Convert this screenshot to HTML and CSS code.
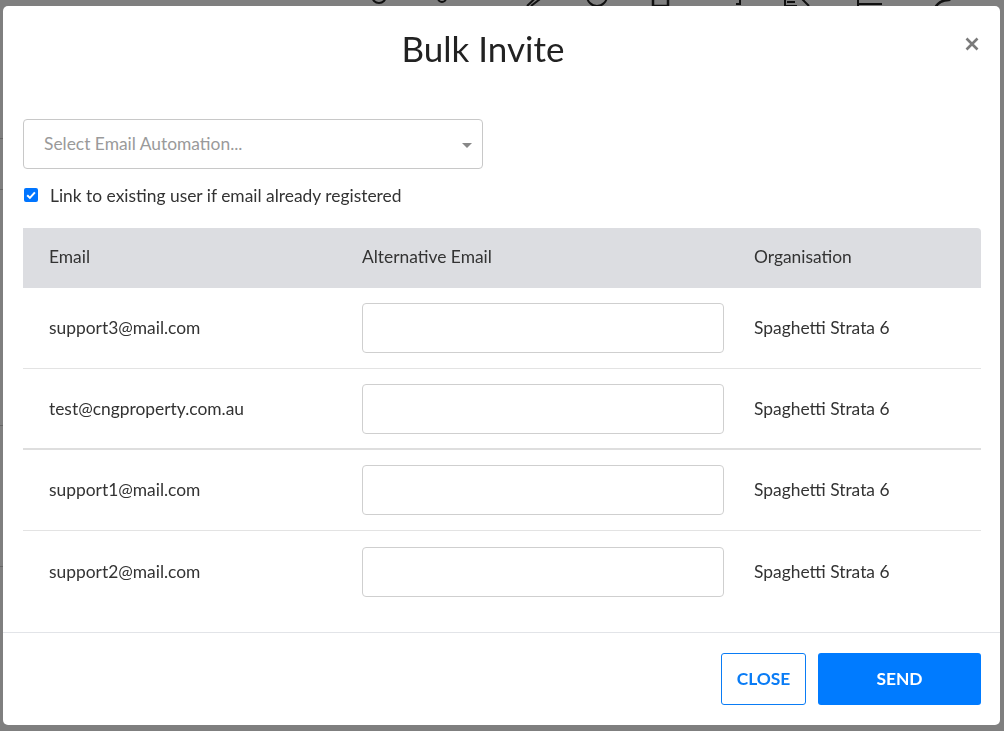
FILE: index.html
```html
<!DOCTYPE html>
<html lang="en">
<head>
<meta charset="utf-8">
<title>Bulk Invite</title>
<link rel="stylesheet" href="styles.css">
</head>
<body>
<div class="page">
  <div class="toolbar">
    <svg class="ti i1" width="22" height="20" viewBox="0 0 22 20"><circle cx="11" cy="8" r="7" fill="none" stroke="#222" stroke-width="2"/></svg>
    <svg class="ti i2" width="10" height="20" viewBox="0 0 10 20"><circle cx="5" cy="10" r="4" fill="none" stroke="#222" stroke-width="2"/></svg>
    <svg class="ti i3" width="22" height="20" viewBox="0 0 22 20"><path d="M3 18 L18 4 M7 18 L20 8" stroke="#222" stroke-width="2" fill="none"/></svg>
    <svg class="ti i4" width="24" height="20" viewBox="0 0 24 20"><circle cx="12" cy="8" r="10" fill="none" stroke="#222" stroke-width="2"/></svg>
    <svg class="ti i5" width="27" height="20" viewBox="0 0 27 20"><rect x="6" y="0" width="15" height="18" fill="none" stroke="#222" stroke-width="2.5"/></svg>
    <svg class="ti i6" width="10" height="20" viewBox="0 0 10 20"><path d="M5 0 V16 H1" stroke="#222" stroke-width="2" fill="none"/></svg>
    <svg class="ti i7" width="32" height="20" viewBox="0 0 32 20"><path d="M2 0 V18 H14 M4 14 H12 M14 6 L26 18" stroke="#222" stroke-width="2" fill="none"/></svg>
    <svg class="ti i8" width="34" height="20" viewBox="0 0 34 20"><path d="M6 0 V18 M6 16 H30 M12 4 V12" stroke="#222" stroke-width="2" fill="none"/></svg>
    <svg class="ti i9" width="26" height="20" viewBox="0 0 26 20"><path d="M2 20 Q6 12 16 12 L24 6" stroke="#222" stroke-width="2.5" fill="none"/></svg>
  </div>
  <div class="pagelines">
    <div class="pl pl1"></div>
    <div class="pl pl2"></div>
    <div class="pl pl3"></div>
    <div class="pl pl4"></div>
  </div>
</div>

<div class="overlay">
  <div class="modal">
    <div class="modal-header">
      <h1 class="modal-title">Bulk Invite</h1>
      <button class="close-x" aria-label="Close">
        <svg width="14" height="14" viewBox="0 0 14 14"><path d="M1.5 1.5 L12.5 12.5 M12.5 1.5 L1.5 12.5" stroke="#7a7a7a" stroke-width="2.6" stroke-linecap="butt"/></svg>
      </button>
    </div>
    <div class="modal-body">
      <div class="select">
        <span class="placeholder">Select Email Automation...</span>
        <span class="caret"></span>
      </div>
      <label class="check-row">
        <span class="checkbox">
          <svg width="14" height="14" viewBox="0 0 14 14"><path d="M3.2 7.2 L5.9 9.9 L10.9 4.3" stroke="#fff" stroke-width="2" fill="none"/></svg>
        </span>
        <span class="check-label">Link to existing user if email already registered</span>
      </label>
      <div class="table">
        <div class="thead">
          <div class="cell">Email</div>
          <div class="cell">Alternative Email</div>
          <div class="cell">Organisation</div>
        </div>
        <div class="row">
          <div class="cell">support3@mail.com</div>
          <div class="cell"><div class="input"></div></div>
          <div class="cell">Spaghetti Strata 6</div>
        </div>
        <div class="row thick">
          <div class="cell">test@cngproperty.com.au</div>
          <div class="cell"><div class="input"></div></div>
          <div class="cell">Spaghetti Strata 6</div>
        </div>
        <div class="row">
          <div class="cell">support1@mail.com</div>
          <div class="cell"><div class="input"></div></div>
          <div class="cell">Spaghetti Strata 6</div>
        </div>
        <div class="row last">
          <div class="cell">support2@mail.com</div>
          <div class="cell"><div class="input"></div></div>
          <div class="cell">Spaghetti Strata 6</div>
        </div>
      </div>
    </div>
    <div class="modal-footer">
      <button class="btn btn-outline">CLOSE</button>
      <button class="btn btn-primary">SEND</button>
    </div>
  </div>
</div>
</body>
</html>
```

FILE: styles.css
```css
* { box-sizing: border-box; }

html, body {
  margin: 0;
  padding: 0;
  height: 100%;
}

body {
  font-family: Lato, "Open Sans", "Liberation Sans", sans-serif;
  background: #fff;
  color: #333;
  overflow: hidden;
}

/* underlying page */
.page {
  height: 100%;
}

.toolbar {
  display: flex;
  align-items: flex-start;
  margin-top: -12px;
  padding-left: 368px;
  height: 20px;
}

.ti { flex: none; }
.i2 { margin-left: 47px; }
.i3 { margin-left: 77px; }
.i4 { margin-left: 39px; }
.i5 { margin-left: 38px; }
.i6 { margin-left: 61px; }
.i7 { margin-left: 38px; }
.i8 { margin-left: 37px; }
.i9 { margin-left: 47px; }

.pagelines {
  display: flex;
  flex-direction: column;
}

.pl {
  height: 1px;
  width: 40px;
  background: #ccc;
}
.pl1 { margin-top: 130px; }
.pl2 { margin-top: 50px; }
.pl3 { margin-top: 235px; }
.pl4 { margin-top: 140px; }

/* overlay + modal */
.overlay {
  position: fixed;
  inset: 0;
  background: rgba(0, 0, 0, 0.5);
  padding: 6px 4px 6px 3px;
  display: flex;
}

.modal {
  flex: 1;
  background: #fff;
  border-radius: 5px;
  display: flex;
  flex-direction: column;
}

.modal-header {
  position: relative;
  padding: 23px 20px 52px;
  text-align: center;
}

.modal-title {
  margin: 0;
  padding-right: 37px;
  font-size: 35px;
  line-height: 38px;
  font-weight: 400;
  color: #222;
}

.close-x {
  position: absolute;
  top: 31px;
  right: 21px;
  width: 14px;
  height: 14px;
  padding: 0;
  border: 0;
  background: none;
  display: flex;
}

.modal-body {
  flex: 1;
  padding: 0 19px 0 20px;
}

.select {
  width: 460px;
  height: 50px;
  border: 1px solid #c8c8c8;
  border-radius: 4px;
  display: flex;
  align-items: center;
  justify-content: space-between;
  padding: 0 10px 2px 20px;
}

.placeholder {
  font-size: 17.4px;
  color: #9a9a9a;
}

.caret {
  width: 0;
  height: 0;
  margin-top: 5px;
  border-left: 5px solid transparent;
  border-right: 5px solid transparent;
  border-top: 5px solid #888;
}

.check-row {
  display: flex;
  align-items: center;
  gap: 12px;
  margin-top: 16px;
  height: 20px;
  padding-left: 1px;
}

.checkbox {
  width: 14px;
  height: 14px;
  border-radius: 2px;
  background: #0075ff;
  display: flex;
}

.check-label {
  font-size: 17.4px;
  color: #333;
  line-height: 20px;
  margin-top: 1px;
}

.table {
  margin-top: 23px;
}

.thead, .row {
  display: grid;
  grid-template-columns: 313px 392px 1fr;
  align-items: center;
}

.thead {
  height: 60px;
  background: #dcdde1;
  border-radius: 0 4px 0 0;
}

.thead .cell {
  padding-bottom: 3px;
}

.row {
  height: 81px;
  border-bottom: 1px solid #e3e3e3;
}

.row .cell {
  padding-bottom: 1px;
}

.row .cell:nth-child(2) {
  padding-bottom: 0;
}

.row.thick {
  border-bottom: 2px solid #dedede;
}

.row.last {
  border-bottom: 0;
}

.cell {
  padding-left: 26px;
  font-size: 17.4px;
  color: #333;
}

.input {
  width: 362px;
  height: 50px;
  border: 1px solid #cfcfcf;
  border-radius: 4px;
  background: #fff;
}

.modal-footer {
  border-top: 1px solid #e2e4e8;
  display: flex;
  justify-content: flex-end;
  gap: 12px;
  padding: 20px 19px 20px 20px;
}

.btn {
  height: 52px;
  border-radius: 3px;
  font-family: Lato, "Open Sans", "Liberation Sans", sans-serif;
  font-weight: 700;
  font-size: 17.4px;
  cursor: pointer;
  padding: 0 0 2px;
}

.btn-outline {
  width: 85px;
  background: #fff;
  color: #0a7cf5;
  border: 1px solid #0a7cf5;
}

.btn-primary {
  width: 163px;
  background: #007bff;
  color: #fff;
  border: 0;
}
```
